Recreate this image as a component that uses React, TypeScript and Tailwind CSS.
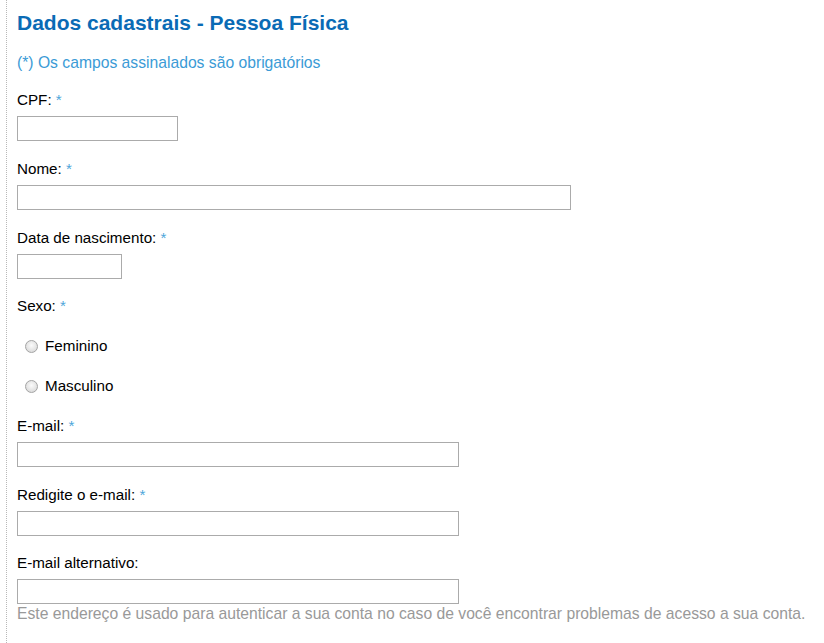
import React from 'react'

const font = "font-['Liberation_Sans',Arial,sans-serif]"

function Req() {
  return <span className="text-[#4ea6da]"> *</span>
}

function Field({ label, required, width, help }: { label: string; required?: boolean; width: string; help?: string }) {
  return (
    <div className="flex flex-col">
      <label className="text-[15.2px] leading-[18px] text-black">
        {label}
        {required && <Req />}
      </label>
      <input type="text" className={`mt-[7px] h-[25px] ${width} border border-[#ababab] bg-white outline-none`} />
      {help && (
        <p className="mt-[1px] text-[15.7px] leading-[18px] text-[#999999] whitespace-nowrap">{help}</p>
      )}
    </div>
  )
}

function Radio({ label }: { label: string }) {
  return (
    <div className="flex h-[18px] items-center pl-[8px]">
      <span className="h-[13px] w-[13px] rounded-full border border-[#a4a4a4] bg-[radial-gradient(circle_at_50%_40%,#fbfbfb,#d2d2d2)]" />
      <span className="ml-[7px] text-[15.2px] leading-[18px] text-black">{label}</span>
    </div>
  )
}

export default function App() {
  return (
    <div className={`${font} h-[643px] w-full overflow-hidden bg-white pl-[6px]`}>
      <div className="flex h-full flex-col border-l border-dotted border-[#b8b8b8] pl-[10px] pt-[11px]">
        <h1 className="text-[21px] font-bold leading-[24px] text-[#0a6bb5]">Dados cadastrais - Pessoa Física</h1>
        <p className="mt-[18px] text-[15.7px] leading-[20px] text-[#3b9bd6]">(*) Os campos assinalados são obrigatórios</p>

        <div className="mt-[18px] flex flex-col gap-[19px]">
          <Field label="CPF:" required width="w-[161px]" />
          <Field label="Nome:" required width="w-[554px]" />
          <Field label="Data de nascimento:" required width="w-[105px]" />
          <div className="-mt-px flex flex-col gap-[22px]">
            <label className="text-[15.2px] leading-[18px] text-black">
              Sexo:
              <Req />
            </label>
            <Radio label="Feminino" />
            <Radio label="Masculino" />
          </div>
        </div>

        <div className="mt-[22px] flex flex-col gap-[18.5px]">
          <Field label="E-mail:" required width="w-[442px]" />
          <Field label="Redigite o e-mail:" required width="w-[442px]" />
          <Field
            label="E-mail alternativo:"
            width="w-[442px]"
            help="Este endereço é usado para autenticar a sua conta no caso de você encontrar problemas de acesso a sua conta."
          />
        </div>
      </div>
    </div>
  )
}
